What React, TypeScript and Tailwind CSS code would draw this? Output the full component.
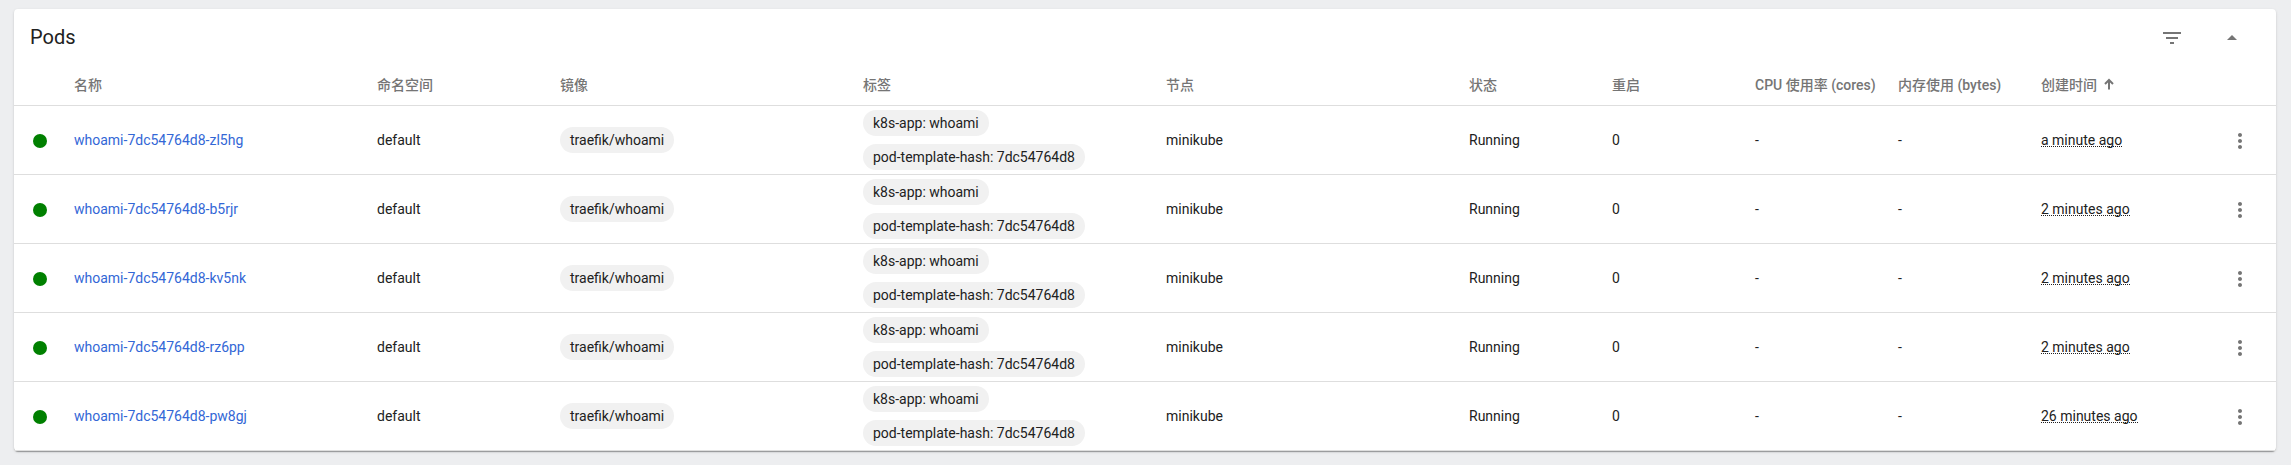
import React from "react";

const columns = ["名称", "命名空间", "镜像", "标签", "节点", "状态", "重启", "CPU 使用率 (cores)", "内存使用 (bytes)"];

const pods = [
  { name: "whoami-7dc54764d8-zl5hg", created: "a minute ago" },
  { name: "whoami-7dc54764d8-b5rjr", created: "2 minutes ago" },
  { name: "whoami-7dc54764d8-kv5nk", created: "2 minutes ago" },
  { name: "whoami-7dc54764d8-rz6pp", created: "2 minutes ago" },
  { name: "whoami-7dc54764d8-pw8gj", created: "26 minutes ago" },
];

const grid =
  "grid grid-cols-[60px_303px_183px_303px_303px_303px_143px_143px_143px_143px_143px_1fr] items-center border-b border-[#dedede]";

function Chip({ children }: { children: React.ReactNode }) {
  return <span className="flex h-[26px] items-center rounded-full bg-[#f1f1f1] px-2.5">{children}</span>;
}

function Icon({ d }: { d: string }) {
  return (
    <svg viewBox="0 0 24 24" className="size-6 fill-[#757575]">
      <path d={d} />
    </svg>
  );
}

export default function App() {
  return (
    <div className="h-[465px] bg-[#edeef0] pt-[9px] pr-[15px] pl-3.5 font-['Roboto','Noto_Sans_CJK_SC',sans-serif] text-sm text-[#212121]">
      <section className="rounded bg-white shadow-[0_2px_1px_-1px_rgba(0,0,0,0.2),0_1px_1px_0_rgba(0,0,0,0.14),0_1px_3px_0_rgba(0,0,0,0.12)]">
        <header className="flex h-14 items-center pr-8 pl-4">
          <h2 className="flex-1 text-xl">Pods</h2>
          <div className="mt-0.5 flex gap-9">
            <Icon d="M10 18h4v-2h-4v2zM3 6v2h18V6H3zm3 7h12v-2H6v2z" />
            <Icon d="M7 14l5-5 5 5z" />
          </div>
        </header>
        <div className={`${grid} h-[41px] whitespace-nowrap font-medium text-[#757575]`}>
          <span />
          {columns.map((c) => (
            <span key={c}>{c}</span>
          ))}
          <span className="flex items-center gap-[7px]">
            创建时间
            <svg viewBox="0 0 10 12" className="-mt-0.5 h-3 w-2.5 fill-none stroke-[#757575] stroke-2">
              <path d="M5 11.5V2M1 6l4-4 4 4" />
            </svg>
          </span>
        </div>
        {pods.map((p) => (
          <div key={p.name} className={`${grid} h-[69px]`}>
            <span className="ml-[19px] mt-0.5 size-3.5 rounded-full bg-[#008000]" />
            <a className="text-[#3367d6]">{p.name}</a>
            <span>default</span>
            <div className="flex">
              <Chip>traefik/whoami</Chip>
            </div>
            <div className="flex flex-col items-start gap-2">
              <Chip>k8s-app: whoami</Chip>
              <Chip>pod-template-hash: 7dc54764d8</Chip>
            </div>
            <span>minikube</span>
            <span>Running</span>
            <span>0</span>
            <span>-</span>
            <span>-</span>
            <div className="flex">
              <span className="h-3.5 border-b border-dotted border-[#212121] leading-[14px]">{p.created}</span>
            </div>
            <div className="mt-0.5 pl-11">
              <Icon d="M12 8c1.1 0 2-.9 2-2s-.9-2-2-2-2 .9-2 2 .9 2 2 2zm0 2c-1.1 0-2 .9-2 2s.9 2 2 2 2-.9 2-2-.9-2-2-2zm0 6c-1.1 0-2 .9-2 2s.9 2 2 2 2-.9 2-2-.9-2-2-2z" />
            </div>
          </div>
        ))}
      </section>
    </div>
  );
}
